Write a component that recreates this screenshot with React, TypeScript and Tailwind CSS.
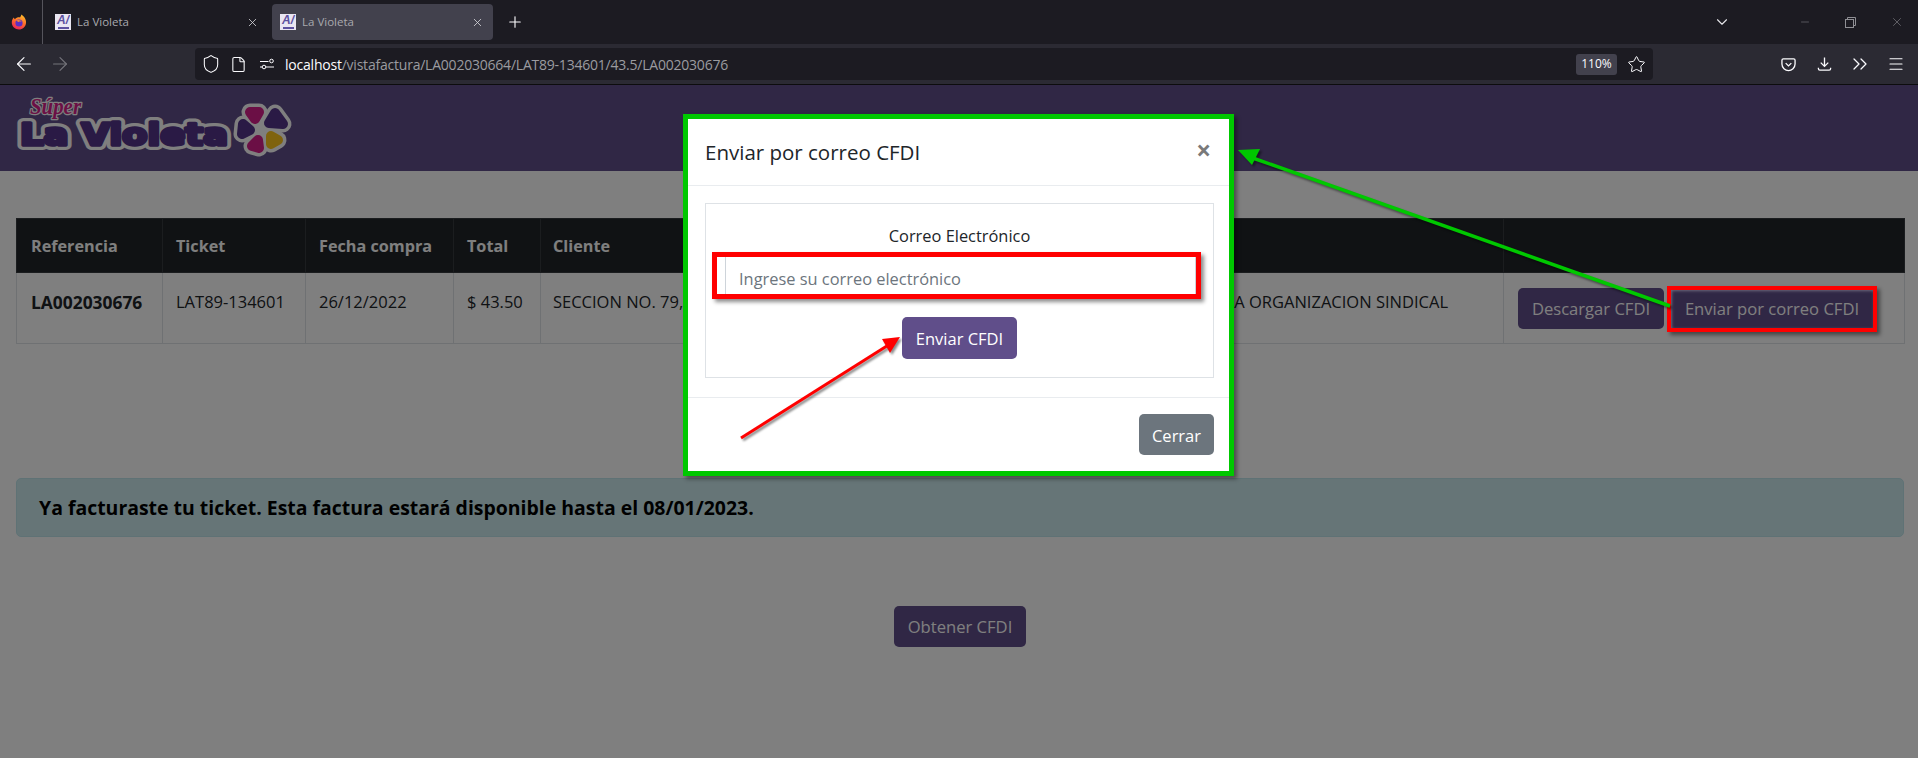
import { ArrowLeft, ArrowRight, ChevronDown, ChevronsRight, File, Menu, Minus, Plus, Shield, Star, X } from "lucide-react"

function Firefox() {
    return (
        <svg width="16" height="16" viewBox="0 0 16 16">
            <defs>
                <linearGradient id="ff" x1="0.7" y1="0" x2="0.3" y2="1">
                    <stop offset="0" stopColor="#ffc02a" />
                    <stop offset="0.5" stopColor="#ff6a2b" />
                    <stop offset="1" stopColor="#e8205f" />
                </linearGradient>
            </defs>
            <path d="M10.5 0.5 C12.5 2 15.5 5 15 9 C14.6 13 11.5 15.5 8 15.5 C4 15.5 0.8 12.5 0.8 8.5 C0.8 6.5 1.6 4.8 2.8 3.6 C3 4.5 3.4 5 4 5.2 C5 3.8 7 3.2 9 3.4 C9.6 2.4 10.2 1.5 10.5 0.5 Z" fill="url(#ff)" />
            <circle cx="8" cy="9" r="3.6" fill="#5b2fc4" />
            <path d="M5 6.5 C7 5.4 10 6 11 8 C10 7.4 8.5 7.4 7.4 8 Z" fill="#ff8a2b" />
        </svg>
    )
}

function Favicon() {
    return (
        <div className="w-[16px] h-[16px] bg-[#e9e6f2] flex flex-col items-center justify-between shrink-0 overflow-hidden">
            <span className="text-[12px] leading-[12px] font-bold italic text-[#5d519f] font-['Liberation_Sans',sans-serif]">A/</span>
            <div className="w-[11px] h-[2px] mb-[1px] bg-[#5d519f]" />
        </div>
    )
}

function Tab({ active }: { active?: boolean }) {
    return (
        <div className={active ? "w-[221px] h-[36px] mt-[4px] rounded-[4px] bg-[#42414d] flex items-center pl-[8px] pr-[9px]" : "w-[221px] h-[36px] mt-[4px] rounded-[4px] flex items-center pl-[8px] pr-[9px]"}>
            <Favicon />
            <span className="ml-[6px] flex-1 text-[11.5px] text-[#a9a9ae] font-['Open_Sans',sans-serif]">La Violeta</span>
            <X size={13} strokeWidth={1.5} className="text-[#d8d8dc]" />
        </div>
    )
}

function BrowserChrome() {
    return (
        <div className="shrink-0">
            <div className="h-[44px] bg-[#1c1b22] flex">
                <div className="w-[43px] h-[44px] border-r border-[#55545c] flex items-center justify-center pr-[4px]">
                    <Firefox />
                </div>
                <div className="ml-[4px] flex gap-[4px]">
                    <Tab />
                    <Tab active />
                </div>
                <div className="w-[44px] flex items-center justify-center">
                    <Plus size={18} strokeWidth={1.5} className="text-[#fbfbfe]" />
                </div>
                <div className="flex-1 flex items-center justify-end text-[#8f8f94]">
                    <ChevronDown size={18} strokeWidth={1.5} className="text-[#e4e4e8] mr-[68px]" />
                    <Minus size={12} strokeWidth={1} className="mr-[34px]" />
                    <svg width="11" height="11" viewBox="0 0 11 11" fill="none" stroke="currentColor" className="mr-[34px]">
                        <rect x="0.5" y="2.5" width="8" height="8" />
                        <path d="M2.5 2.5 V0.5 H10.5 V8.5 H8.5" />
                    </svg>
                    <X size={14} strokeWidth={1} className="mr-[14px]" />
                </div>
            </div>
            <div className="h-[41px] bg-[#2b2a33] border-b border-[#0c0c0d] flex items-start text-[#fbfbfe]">
                <div className="pl-[13px] h-[40px] flex items-center gap-[14px] w-[195px]">
                    <ArrowLeft size={22} strokeWidth={1.25} />
                    <ArrowRight size={22} strokeWidth={1.25} className="text-[#75747b]" />
                </div>
                <div className="mt-[4px] w-[1458px] h-[32px] bg-[#1c1b22] rounded-[4px] flex items-center pl-[6px] pr-[7px]">
                    <Shield size={20} strokeWidth={1.25} />
                    <File size={17} strokeWidth={1.5} className="ml-[9px]" />
                    <svg width="16" height="12" viewBox="0 0 16 12" fill="none" stroke="currentColor" className="ml-[12px]">
                        <path d="M1 3.5 H9.5 M1 9 H3" />
                        <circle cx="12.5" cy="3" r="1.8" />
                        <circle cx="5" cy="9" r="1.8" />
                        <path d="M7 9 H15" />
                    </svg>
                    <div className="ml-[10px] flex-1 text-[14px] tracking-[-0.22px] font-['Open_Sans',sans-serif] text-[#9b9ba0]">
                        <span className="text-[#fbfbfe]">localhost</span>/vistafactura/LA002030664/LAT89-134601/43.5/LA002030676
                    </div>
                    <div className="w-[41px] h-[21px] rounded-[3px] bg-[#42414d] text-[12px] flex items-center justify-center font-['Open_Sans',sans-serif]">110%</div>
                    <Star size={19} strokeWidth={1.25} className="ml-[10px]" />
                </div>
                <div className="flex-1 h-[40px] flex items-center justify-end pr-[4px]">
                    <div className="w-9 flex justify-center">
                        <svg width="15" height="15" viewBox="0 0 16 16" fill="none" stroke="currentColor" strokeWidth="1.4">
                            <path d="M2.5 2 H13.5 Q15 2 15 3.5 V7.5 C15 11.5 11.5 14.5 8 14.5 C4.5 14.5 1 11.5 1 7.5 V3.5 Q1 2 2.5 2 Z" />
                            <path d="M5 6.5 L8 9.5 L11 6.5" />
                        </svg>
                    </div>
                    <div className="w-9 flex justify-center">
                        <svg width="15" height="16" viewBox="0 0 16 16" fill="none" stroke="currentColor" strokeWidth="1.4">
                            <path d="M8 1 V10.5 M4 6.5 L8 10.5 L12 6.5" />
                            <path d="M1.5 12 V13 Q1.5 14.5 3 14.5 H13 Q14.5 14.5 14.5 13 V12" />
                        </svg>
                    </div>
                    <div className="w-9 flex justify-center">
                        <ChevronsRight size={24} strokeWidth={1.25} />
                    </div>
                    <div className="w-9 flex justify-center">
                        <Menu size={18} strokeWidth={1.5} />
                    </div>
                </div>
            </div>
        </div>
    )
}

function Logo() {
    const petals = [
        { points: "250,24 259,24 255,31", fill: "#d61e8a" },
        { points: "275,25 283,36 269,35", fill: "#54348a" },
        { points: "243,36 250,42 242,46", fill: "#54348a" },
        { points: "258,52 259,60 252,58", fill: "#d61e8a" },
        { points: "271,48 278,52 271,56", fill: "#ffc61c" },
    ]
    return (
        <svg width="300" height="80" viewBox="0 0 300 80">
            <circle cx="260" cy="43" r="9" fill="#ffffff" />
            {petals.map((p) => (
                <polygon key={p.points} points={p.points} fill="#ffffff" stroke="#ffffff" strokeWidth="17" strokeLinejoin="round" />
            ))}
            {petals.map((p) => (
                <polygon key={p.fill + p.points} points={p.points} fill={p.fill} stroke={p.fill} strokeWidth="10" strokeLinejoin="round" />
            ))}
            <text x="20" y="57" textLength="208" lengthAdjust="spacingAndGlyphs" fontFamily="DejaVu Sans" fontWeight="700" fontSize="31" fill="#ffffff" stroke="#ffffff" strokeWidth="10" strokeLinejoin="round">La Violeta</text>
            <text x="20" y="57" textLength="208" lengthAdjust="spacingAndGlyphs" fontFamily="DejaVu Sans" fontWeight="700" fontSize="31" fill="#54348a" stroke="#54348a" strokeWidth="3.5" strokeLinejoin="round">La Violeta</text>
            <text x="30" y="26" textLength="51" lengthAdjust="spacingAndGlyphs" fontFamily="Liberation Serif" fontStyle="italic" fontWeight="700" fontSize="23" fill="#d61e8a" stroke="#ffffff" strokeWidth="2.5" strokeLinejoin="round" paintOrder="stroke">Súper</text>
        </svg>
    )
}

function VioletButton({ label, className }: { label: string; className: string }) {
    return (
        <button className={"h-[41px] pt-[2px] rounded-[5px] bg-[#604e8a] text-white text-[16.6px] flex items-center justify-center " + className}>{label}</button>
    )
}

function Page() {
    return (
        <div className="h-full bg-white">
            <div className="h-[86px] bg-[#604e8a] pt-[3px]">
                <Logo />
            </div>
            <div className="pl-4 pr-[14px] pt-[47px]">
                <table className="w-[1888px] table-fixed border-collapse text-[16.5px] text-[#212529]">
                    <thead>
                        <tr className="h-[54px] bg-[#212529] text-white text-[16.2px] font-bold text-left">
                            <th className="w-[146px] px-[14px] pt-[2px] border border-[#373b3e]">Referencia</th>
                            <th className="w-[143px] px-[13px] pt-[2px] border border-[#373b3e]">Ticket</th>
                            <th className="w-[148px] px-[13px] pt-[2px] border border-[#373b3e]">Fecha compra</th>
                            <th className="w-[87px] px-[13px] pt-[2px] border border-[#373b3e]">Total</th>
                            <th className="w-[963px] px-[12px] pt-[2px] border border-[#373b3e]">Cliente</th>
                            <th className="w-[401px] border border-[#373b3e]"></th>
                        </tr>
                    </thead>
                    <tbody>
                        <tr className="h-[71px] align-top">
                            <td className="px-[14px] pt-[16px] text-[17.4px] font-bold border border-[#dee2e6]">LA002030676</td>
                            <td className="px-[13px] pt-[17px] border border-[#dee2e6]">LAT89-134601</td>
                            <td className="px-[13px] pt-[17px] border border-[#dee2e6]">26/12/2022</td>
                            <td className="px-[13px] pt-[17px] border border-[#dee2e6]">$ 43.50</td>
                            <td className="pl-[12px] pr-[55px] pt-[17px] border border-[#dee2e6]">
                                <div className="flex justify-between whitespace-nowrap">
                                    <span>SECCION NO. 79,</span>
                                    <span>DE LA ORGANIZACION SINDICAL</span>
                                </div>
                            </td>
                            <td className="pl-[14px] pt-[15px] border border-[#dee2e6]">
                                <div className="flex gap-[6px]">
                                    <VioletButton label="Descargar CFDI" className="w-[146px]" />
                                    <VioletButton label="Enviar por correo CFDI" className="w-[204px] rounded-none" />
                                </div>
                            </td>
                        </tr>
                    </tbody>
                </table>
                <div className="mt-[134px] w-[1888px] h-[59px] rounded-[5px] bg-[#cdebef] border border-[#bee5eb] flex items-center pl-[22px] text-[19.45px] font-bold text-black">
                    Ya facturaste tu ticket. Esta factura estará disponible hasta el 08/01/2023.
                </div>
                <div className="mt-[69px] flex justify-center">
                    <VioletButton label="Obtener CFDI" className="w-[132px]" />
                </div>
            </div>
        </div>
    )
}

function Modal() {
    return (
        <div className="absolute left-[683px] top-[29px] w-[551px] h-[362px] z-20 border-[5px] border-[#00c800] bg-white shadow-[3px_3px_4px_rgba(0,0,0,0.4)] text-[#212529] flex flex-col">
            <div className="h-[67px] shrink-0 border-b border-[#e9ecef] flex items-center justify-between pl-[17px] pr-[18px]">
                <span className="text-[20.5px]">Enviar por correo CFDI</span>
                <span className="text-[26px] leading-none font-bold text-[#7a7a7a] mb-[4px]">×</span>
            </div>
            <div className="pl-[17px] pr-[15px] pt-[17px] pb-[19px] border-b border-[#e9ecef]">
                <div className="h-[175px] border border-[#dee2e6] flex flex-col items-center">
                    <label className="mt-[21px] h-[22px] leading-[22px] text-[16.4px]">Correo Electrónico</label>
                    <div className="mt-[5px] self-start ml-[6px] w-[489px] h-[47px] border-[5px] border-[#ff0000] shadow-[3px_3px_4px_rgba(0,0,0,0.45)] pl-[8px]">
                        <input placeholder="Ingrese su correo electrónico" className="w-full h-full bg-white border-x border-[#ced4da] pl-[13px] pt-[6px] text-[16.4px] outline-none placeholder:text-[#6c757d]" />
                    </div>
                    <button className="mt-[18px] w-[115px] h-[42px] pt-[2px] rounded-[5px] bg-[#604e8a] text-white text-[16.5px]">Enviar CFDI</button>
                </div>
            </div>
            <div className="flex-1 flex justify-end pt-[16px] pr-[15px]">
                <button className="w-[75px] h-[41px] pt-[3px] rounded-[5px] bg-[#6c757d] text-white text-[16.5px]">Cerrar</button>
            </div>
        </div>
    )
}

function Annotations() {
    return (
        <>
            <div className="absolute left-[1667px] top-[201px] w-[210px] h-[46px] z-20 border-[4px] border-[#ff0000] shadow-[3px_3px_4px_rgba(0,0,0,0.45),inset_1px_1px_3px_rgba(255,255,255,0.3)]" />
            <svg className="absolute left-0 top-0 z-30 w-[1918px] h-[673px] pointer-events-none drop-shadow-[2px_2px_1px_rgba(0,0,0,0.45)]" viewBox="0 0 1918 673">
                <path d="M1670 221 L1250 72" stroke="#00c800" strokeWidth="3.5" fill="none" />
                <polygon points="1238,65 1260,64 1252,80" fill="#00c800" />
                <path d="M741 353 L890 259" stroke="#ff0000" strokeWidth="3" fill="none" />
                <polygon points="900,252 882,254 890,268" fill="#ff0000" />
            </svg>
        </>
    )
}

export default function App() {
    return (
        <div className="w-[1918px] h-[758px] overflow-hidden flex flex-col font-['Open_Sans',sans-serif]">
            <BrowserChrome />
            <div className="relative flex-1">
                <Page />
                <div className="absolute inset-0 bg-black/50 z-10" />
                <Modal />
                <Annotations />
            </div>
        </div>
    )
}
